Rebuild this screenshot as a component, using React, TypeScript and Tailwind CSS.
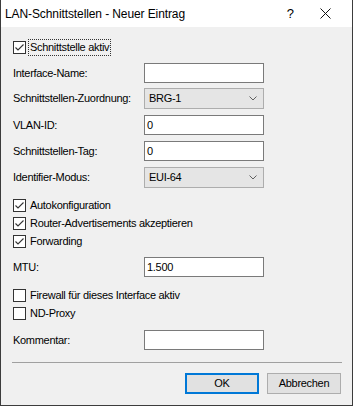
import React from "react";

const font = { fontFamily: '"Liberation Sans", Arial, sans-serif' };

function Box({ checked }: { checked: boolean }) {
  return (
    <div className="w-[13px] h-[13px] border border-[#333333] bg-white shrink-0 flex items-center justify-center">
      {checked && (
        <svg width="11" height="11" viewBox="0 0 11 11">
          <path d="M1.5 5.5 L4 8 L9.5 2.5" fill="none" stroke="#333333" strokeWidth="1.1" />
        </svg>
      )}
    </div>
  );
}

const txt = "text-[11px] tracking-[-0.3px] text-black whitespace-nowrap";

function Check({ label, checked, className = "" }: { label: string; checked: boolean; className?: string }) {
  return (
    <div className={`h-[18px] flex items-center ${className}`}>
      <Box checked={checked} />
      <span className={`ml-[4px] leading-none ${txt}`}>{label}</span>
    </div>
  );
}

function Input({ label, value, className = "" }: { label: string; value: string; className?: string }) {
  return (
    <div className={`flex items-center h-[20px] ${className}`}>
      <div className={`w-[131px] ${txt}`}>{label}</div>
      <div className={`w-[120px] h-[20px] border border-[#7a7a7a] bg-white flex items-center pl-[2px] ${txt}`}>
        {value}
      </div>
    </div>
  );
}

function Select({ label, value, className = "" }: { label: string; value: string; className?: string }) {
  return (
    <div className={`flex items-center h-[21px] ${className}`}>
      <div className={`w-[131px] ${txt}`}>{label}</div>
      <div className={`w-[120px] h-[21px] border border-[#adadad] bg-[#e5e5e5] flex items-center justify-between pl-[4px] pr-[6px] ${txt}`}>
        <span>{value}</span>
        <svg width="8" height="5" viewBox="0 0 8 5">
          <path d="M0.5 0.5 L4 4 L7.5 0.5" fill="none" stroke="#606060" strokeWidth="1" />
        </svg>
      </div>
    </div>
  );
}

export default function App() {
  return (
    <div className="w-[353px] h-[406px] bg-[#f0f0f0] border-l border-r border-b border-[#3c3c3c] flex flex-col" style={font}>
      <div className="h-[27px] bg-white flex items-center shrink-0">
        <span className="ml-[4px] text-[12px] tracking-[-0.1px] text-black whitespace-nowrap">LAN-Schnittstellen - Neuer Eintrag</span>
        <span className="ml-auto mr-[26px] text-[13px] text-black">?</span>
        <svg width="11" height="11" viewBox="0 0 11 11" className="mr-[21px]">
          <path d="M0.5 0.5 L10.5 10.5 M10.5 0.5 L0.5 10.5" stroke="#111111" strokeWidth="1" />
        </svg>
      </div>
      <div className="flex flex-col pl-[12px] pr-[11px]">
        <div className="h-[17px] mt-[12px] flex items-center">
          <Box checked={true} />
          <span className={`ml-[2px] px-[1px] h-[17px] flex items-center border border-dotted border-[#333333] leading-none ${txt}`}>
            Schnittstelle aktiv
          </span>
        </div>
        <Input label="Interface-Name:" value="" className="mt-[7px]" />
        <Select label="Schnittstellen-Zuordnung:" value="BRG-1" className="mt-[5px]" />
        <Input label="VLAN-ID:" value="0" className="mt-[6px]" />
        <Input label="Schnittstellen-Tag:" value="0" className="mt-[6px]" />
        <Select label="Identifier-Modus:" value="EUI-64" className="mt-[6px]" />
        <Check label="Autokonfiguration" checked={true} className="mt-[8px]" />
        <Check label="Router-Advertisements akzeptieren" checked={true} />
        <Check label="Forwarding" checked={true} />
        <Input label="MTU:" value="1.500" className="mt-[7px]" />
        <Check label="Firewall für dieses Interface aktiv" checked={false} className="mt-[9px]" />
        <Check label="ND-Proxy" checked={false} />
        <Input label="Kommentar:" value="" className="mt-[8px]" />
        <div className="mt-[12px] -ml-px w-[330px] h-px bg-[#a0a0a0]" />
        <div className="mt-[10px] flex justify-end gap-[8px]">
          <div className={`w-[74px] h-[21px] border-2 border-[#0078d7] bg-[#e1e1e1] flex items-center justify-center ${txt}`}>
            OK
          </div>
          <div className={`w-[74px] h-[21px] border border-[#adadad] bg-[#e1e1e1] flex items-center justify-center ${txt}`}>
            Abbrechen
          </div>
        </div>
      </div>
    </div>
  );
}
